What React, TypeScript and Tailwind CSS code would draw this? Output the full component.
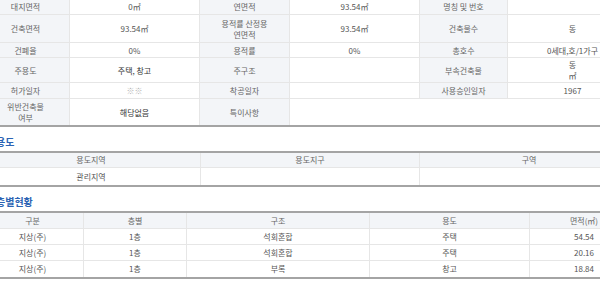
import React from 'react';

// Building register summary: overview grid, zoning table, floor table

const FONT = { fontFamily: '"Noto Sans CJK KR", "Noto Sans", sans-serif' };

type Cell = { text: React.ReactNode; label?: boolean; span?: boolean; tone?: string };

const OVERVIEW: { h: string; cells: Cell[] }[] = [
  {
    h: 'h-[16px]',
    cells: [
      { text: '대지면적', label: true },
      { text: '0㎡' },
      { text: '연면적', label: true },
      { text: '93.54㎡' },
      { text: '명칭 및 번호', label: true },
      { text: '' },
    ],
  },
  {
    h: 'h-[28px]',
    cells: [
      { text: '건축면적', label: true },
      { text: '93.54㎡' },
      { text: <>용적률 산정용<br />연면적</>, label: true },
      { text: '93.54㎡' },
      { text: '건축물수', label: true },
      { text: '동' },
    ],
  },
  {
    h: 'h-[15px]',
    cells: [
      { text: '건폐율', label: true },
      { text: '0%' },
      { text: '용적률', label: true },
      { text: '0%' },
      { text: '총호수', label: true },
      { text: '0세대,호/1가구' },
    ],
  },
  {
    h: 'h-[25px]',
    cells: [
      { text: '주용도', label: true },
      { text: '주택, 창고', tone: 'text-[#333]' },
      { text: '주구조', label: true },
      { text: '' },
      { text: '부속건축물', label: true },
      { text: <>동<br />㎡</> },
    ],
  },
  {
    h: 'h-[16px]',
    cells: [
      { text: '허가일자', label: true },
      { text: '※※', tone: 'text-[#b0b0b0]' },
      { text: '착공일자', label: true },
      { text: '' },
      { text: '사용승인일자', label: true },
      { text: '1967' },
    ],
  },
  {
    h: 'h-[26px]',
    cells: [
      { text: <>위반건축물<br />여부</>, label: true },
      { text: '해당없음', tone: 'text-[#333]' },
      { text: '특이사항', label: true },
      { text: '', span: true },
    ],
  },
];

const FLOORS = [
  { kind: '지상(주)', floor: '1층', structure: '석회혼합', use: '주택', area: '54.54' },
  { kind: '지상(주)', floor: '1층', structure: '석회혼합', use: '주택', area: '20.16' },
  { kind: '지상(주)', floor: '1층', structure: '부록', use: '창고', area: '18.84' },
];

const SectionTitle: React.FC<{ children: React.ReactNode }> = ({ children }) => (
  <div className="h-[24px] pt-[9px] pl-[14px]">
    <h2 className="text-[10px] leading-[12px] font-bold text-[#2b63b3]">{children}</h2>
  </div>
);

export default function App() {
  return (
    <div className="w-[600px] h-[283px] overflow-hidden bg-white text-[8px] text-[#555]" style={FONT}>
      <div className="w-[656px] -ml-[18px] -mt-[1px]">
        {/* Overview */}
        <div className="grid grid-cols-[88px_130px_90px_130px_88px_130px] border-b-2 border-[#a4a4a4]">
          {OVERVIEW.map((row, i) =>
            row.cells.map((c, j) => (
              <div
                key={`${i}-${j}`}
                className={`${row.h} flex items-center justify-center text-center leading-[11px] border-b border-r border-[#e6e6e6] ${
                  c.label ? 'bg-[#f3f5f8] text-[#666]' : 'bg-white text-[#555]'
                } ${c.span ? 'col-span-3' : ''} ${i === OVERVIEW.length - 1 ? 'border-b-0' : ''}`}
              >
                <span className={c.tone}>{c.text}</span>
              </div>
            ))
          )}
        </div>

        <SectionTitle>용도</SectionTitle>

        {/* Zoning */}
        <div className="border-t-2 border-b-2 border-[#a4a4a4]">
          <div className="grid grid-cols-[219px_219px_218px] h-[15px] bg-[#f3f5f8] text-[#666] border-b border-[#e6e6e6]">
            <div className="flex items-center justify-center border-r border-[#e6e6e6]">용도지역</div>
            <div className="flex items-center justify-center border-r border-[#e6e6e6]">용도지구</div>
            <div className="flex items-center justify-center">구역</div>
          </div>
          <div className="grid grid-cols-[219px_219px_218px] h-[17px]">
            <div className="flex items-center justify-center border-r border-[#e6e6e6]">관리지역</div>
            <div className="border-r border-[#e6e6e6]" />
            <div />
          </div>
        </div>

        <SectionTitle>층별현황</SectionTitle>

        {/* Floors */}
        <div className="border-t-2 border-b-2 border-[#a4a4a4]">
          <div className="grid grid-cols-[102px_103px_183px_160px_108px] h-[16px] bg-[#f3f5f8] text-[#666] border-b border-[#e6e6e6]">
            <div className="flex items-center justify-center border-r border-[#e6e6e6]">구분</div>
            <div className="flex items-center justify-center border-r border-[#e6e6e6]">층별</div>
            <div className="flex items-center justify-center border-r border-[#e6e6e6]">구조</div>
            <div className="flex items-center justify-center border-r border-[#e6e6e6]">용도</div>
            <div className="flex items-center justify-center">면적(㎡)</div>
          </div>
          {FLOORS.map((f, i) => (
            <div
              key={i}
              className={`grid grid-cols-[102px_103px_183px_160px_108px] h-[16px] ${
                i < FLOORS.length - 1 ? 'border-b border-[#e6e6e6]' : ''
              }`}
            >
              <div className="flex items-center justify-center border-r border-[#e6e6e6]">{f.kind}</div>
              <div className="flex items-center justify-center border-r border-[#e6e6e6]">{f.floor}</div>
              <div className="flex items-center justify-center border-r border-[#e6e6e6]">{f.structure}</div>
              <div className="flex items-center justify-center border-r border-[#e6e6e6]">{f.use}</div>
              <div className="flex items-center justify-center">{f.area}</div>
            </div>
          ))}
        </div>
      </div>
    </div>
  );
}
